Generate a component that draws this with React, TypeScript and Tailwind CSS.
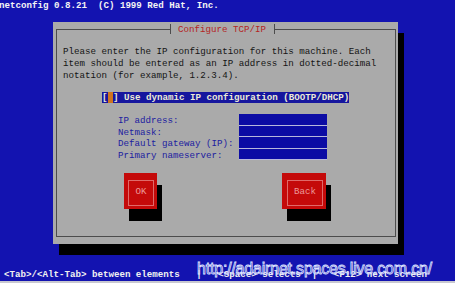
export default function App() {
  const fields = ['IP address:', 'Netmask:', 'Default gateway (IP):', 'Primary nameserver:']

  return (
    <div className="relative flex flex-col w-[455px] h-[283px] overflow-hidden bg-[#1313b0] font-['Liberation_Mono','DejaVu_Sans_Mono',monospace] text-[9.17px]">
      {/* Root title line */}
      <div className="h-[11px] leading-[11px] ml-[-1px] whitespace-pre font-bold text-[#f4f4f4]">
        netconfig 0.8.21  (C) 1999 Red Hat, Inc.
      </div>

      {/* Dialog window */}
      <div className="mt-[11px] ml-[53px] w-[345px] h-[222px] pt-[7px] pl-[3px] pr-[2px] pb-[7px] bg-[#aaaaaa] shadow-[6px_11px_0_#000]">
        <div className="relative h-full border border-[#4c4c4c] pt-[16px] pl-[6px]">
          {/* Title on the top border */}
          <div className="absolute -top-[6.5px] left-[113px] h-[11px] flex items-center bg-[#aaaaaa]">
            <div className="w-px h-[10px] bg-[#4c4c4c]" />
            <span className="pl-[7px] pr-[8px] leading-[11px] text-[#b42424]">Configure TCP/IP</span>
            <div className="w-px h-[10px] bg-[#4c4c4c]" />
          </div>

          <p className="leading-[11.8px] text-[#141414] whitespace-pre">
            {'Please enter the IP configuration for this machine. Each\nitem should be entered as an IP address in dotted-decimal\nnotation (for example, 1.2.3.4).'}
          </p>

          {/* DHCP checkbox */}
          <div className="mt-[11px] ml-[39px] h-[11px] leading-[11px] flex">
            <span className="whitespace-pre bg-[#16169e] text-[#ecead6] font-bold">
              [<span className="bg-[#d0741e]"> </span>] Use dynamic IP configuration (BOOTP/DHCP)
            </span>
          </div>

          {/* Address entries */}
          <div className="mt-[11px] ml-[55px] grid grid-cols-[121px_88px]">
            {fields.map((label) => (
              <div key={label} className="contents">
                <div className="h-[11.5px] leading-[14px] whitespace-pre text-[#2020a0]">{label}</div>
                <div className="h-[11.5px] bg-[#0c0ca4] border-b border-[#b8b8dc]" />
              </div>
            ))}
          </div>

          {/* Buttons */}
          <div className="mt-[13px] flex">
            <div className="ml-[61px] w-[33px] h-[36px] pt-[7px] pl-[4px] pr-[3px] pb-[3px] bg-[#c40a0a] shadow-[5px_12px_0_#000]">
              <div className="h-full border border-[#e06a6a] flex items-center justify-center pb-[3px] text-[#ec9a9a]">
                OK
              </div>
            </div>
            <div className="ml-[125px] w-[44px] h-[36px] pt-[7px] pl-[5px] pr-[3px] pb-[3px] bg-[#c40a0a] shadow-[5px_12px_0_#000]">
              <div className="h-full border border-[#e06a6a] flex items-center justify-center pb-[3px] text-[#ec9a9a]">
                Back
              </div>
            </div>
          </div>
        </div>
      </div>

      <div className="flex-1" />

      {/* Help line */}
      <div className="h-[12px] leading-[12px] pl-[4px] whitespace-pre font-bold text-[#f0f0f0]">
        {'<Tab>/<Alt-Tab> between elements   |   <Space> selects  |   <F12> next screen'}
      </div>
      <div className="h-[2px] bg-[#c8c8d0]" />

      {/* Watermark laid over the help line */}
      <div className="absolute left-[197px] top-[260px] font-['Liberation_Sans',Arial,sans-serif] text-[16px] leading-[17px] tracking-[-0.2px] text-[#2a2ac0]/40 [-webkit-text-stroke:0.8px_#dfe3ff]">
        http://adairnet.spaces.live.com.cn/
      </div>
    </div>
  )
}
